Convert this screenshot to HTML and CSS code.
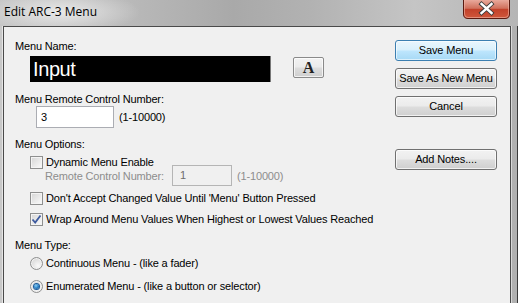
FILE: index.html
```html
<!DOCTYPE html>
<html>
<head>
<meta charset="utf-8">
<link rel="stylesheet" href="styles.css">
</head>
<body>
<div class="window">
  <div class="titlebar">
    <span class="title">Edit ARC-3 Menu</span>
    <div class="close">
      <svg width="47" height="19" viewBox="0 0 47 19">
        <defs>
          <linearGradient id="cg" x1="0" y1="0" x2="0" y2="1">
            <stop offset="0" stop-color="#e9a99b"/>
            <stop offset="0.45" stop-color="#d0705c"/>
            <stop offset="0.5" stop-color="#c2412a"/>
            <stop offset="1" stop-color="#d0583c"/>
          </linearGradient>
        </defs>
        <path d="M0.5 0 V14 Q0.5 18.5 5 18.5 H42 Q46.5 18.5 46.5 14 V0" fill="url(#cg)" stroke="#5a1a10" stroke-width="1"/>
        <path d="M1.5 0 V14 Q1.5 17.5 5 17.5 H42 Q45.5 17.5 45.5 14 V0" fill="none" stroke="#f0b8a8" stroke-opacity="0.6" stroke-width="1"/>
        <path d="M18.5 4 L28.5 13 M28.5 4 L18.5 13" stroke="#3a3a3a" stroke-width="4.2" stroke-linecap="square"/>
        <path d="M18.5 4 L28.5 13 M28.5 4 L18.5 13" stroke="#ffffff" stroke-width="2.4" stroke-linecap="square"/>
      </svg>
    </div>
  </div>
  <div class="frame">
    <div class="client">
      <div class="left">
        <div class="label first">Menu Name:</div>
        <div class="name-row">
          <div class="name-box">Input</div>
          <div class="btn font-btn">A</div>
        </div>
        <div class="label l2">Menu Remote Control Number:</div>
        <div class="field-row">
          <div class="textbox num">3</div>
          <span class="range">(1-10000)</span>
        </div>
        <div class="label l3">Menu Options:</div>
        <div class="check-row r1"><span class="check"></span><span>Dynamic Menu Enable</span></div>
        <div class="sub-row">
          <span class="disabled">Remote Control Number:</span>
          <div class="textbox dis-box">1</div>
          <span class="disabled range2">(1-10000)</span>
        </div>
        <div class="check-row r2"><span class="check"></span><span>Don't Accept Changed Value Until 'Menu' Button Pressed</span></div>
        <div class="check-row r3"><span class="check checked"><svg width="11" height="11" viewBox="0 0 11 11"><path d="M1.5 5.5 L4.2 8.5 L9.5 1.5" fill="none" stroke="#3d5a9e" stroke-width="1.8"/></svg></span><span>Wrap Around Menu Values When Highest or Lowest Values Reached</span></div>
        <div class="label l4">Menu Type:</div>
        <div class="radio-row q1"><span class="radio"></span><span>Continuous Menu - (like a fader)</span></div>
        <div class="radio-row q2"><span class="radio on"><span class="dot"></span></span><span>Enumerated Menu - (like a button or selector)</span></div>
      </div>
      <div class="right">
        <div class="btn wide default">Save Menu</div>
        <div class="btn wide">Save As New Menu</div>
        <div class="btn wide">Cancel</div>
        <div class="btn wide notes">Add Notes....</div>
      </div>
    </div>
  </div>
</div>
</body>
</html>
```
FILE: styles.css
```css
html, body {
  margin: 0;
  padding: 0;
}
body {
  width: 518px;
  height: 303px;
  overflow: hidden;
  font-family: "Liberation Sans", Arial, sans-serif;
  font-size: 11px;
  letter-spacing: -0.15px;
  color: #000;
}
.window {
  width: 518px;
  height: 303px;
  display: flex;
  flex-direction: column;
  background: #b4b4b4;
}
.titlebar {
  height: 26px;
  flex: none;
  display: flex;
  align-items: flex-start;
  justify-content: space-between;
  background:
    radial-gradient(ellipse 80px 22px at 60px 12px, rgba(235,235,235,0.95), rgba(235,235,235,0) 100%),
    linear-gradient(90deg, #c4c4c4 0%, #b9b9b9 25%, #a9a9a9 45%, #b2b2b2 60%, #c5c5c5 80%, #b5b5b5 100%);
}
.title {
  font-family: "Open Sans", "Noto Sans", sans-serif;
  font-size: 12px;
  letter-spacing: 0;
  color: #000;
  margin: 4px 0 0 4px;
  line-height: 16px;
}
.close {
  margin-right: 8px;
  height: 19px;
}
.close svg { display: block; }
.frame {
  flex: 1;
  display: flex;
  padding: 0 6px 0 3px;
  background: linear-gradient(90deg, #c8c8c8, #b0b0b0);
  border-right: 1px solid #3a3a3a;
}
.client {
  flex: 1;
  display: flex;
  background: #f0f0f0;
  border: 1px solid #4a4a4a;
  border-bottom: none;
  box-shadow: 1px 0 0 #d8d8d8, -1px 0 0 #e6e6e6;
}
.left {
  width: 380px;
  padding-left: 11px;
  display: flex;
  flex-direction: column;
  align-items: flex-start;
}
.right {
  width: 102px;
  margin-left: 0;
  padding-top: 13px;
  display: flex;
  flex-direction: column;
}
.label {
  line-height: 13px;
  height: 13px;
}
.first { margin-top: 13px; }
.l2 { margin-top: 11px; }
.l3 { margin-top: 10px; }
.l4 { margin-top: 13px; }
.name-row {
  display: flex;
  align-items: flex-start;
  margin-top: 3px;
  margin-left: 15px;
}
.name-box {
  width: 237px;
  height: 26px;
  background: #000;
  color: #fff;
  font-size: 20px;
  line-height: 26px;
  padding-left: 3px;
  border-right: 1px solid #777;
  box-sizing: content-box;
  letter-spacing: -0.4px;
}
.btn {
  box-sizing: border-box;
  border: 1px solid #707070;
  border-radius: 3px;
  background: linear-gradient(#f2f2f2 0%, #ebebeb 48%, #dddddd 52%, #cfcfcf 100%);
  box-shadow: inset 0 0 0 1px rgba(255,255,255,0.7);
  display: flex;
  align-items: center;
  justify-content: center;
  line-height: 13px;
}
.font-btn {
  width: 31px;
  height: 21px;
  margin-left: 22px;
  margin-top: 1px;
  font-family: "Liberation Serif", "Times New Roman", serif;
  font-weight: bold;
  font-size: 16px;
  letter-spacing: 0;
  color: #222;
  border-color: #8a8a8a;
  border-radius: 2px;
}
.field-row {
  display: flex;
  align-items: center;
  margin-left: 21px;
}
.textbox {
  box-sizing: border-box;
  background: #fff;
  border: 1px solid #abadb3;
  line-height: 13px;
  display: flex;
  align-items: center;
  padding-left: 4px;
}
.num {
  width: 78px;
  height: 22px;
}
.range { margin-left: 5px; }
.check-row, .radio-row {
  display: flex;
  align-items: center;
  height: 13px;
  line-height: 13px;
  margin-left: 15px;
}
.check-row > span:last-child, .radio-row > span:last-child { margin-left: 3px; }
.r1 { margin-top: 5px; }
.r2 { margin-top: 6px; }
.r3 { margin-top: 8px; }
.q1 { margin-top: 5px; }
.q2 { margin-top: 10px; }
.check {
  width: 13px;
  height: 13px;
  box-sizing: border-box;
  border: 1px solid #8e8f8f;
  background: linear-gradient(135deg, #d5d5d5 0%, #e6e6e6 45%, #fbfbfb 100%);
  box-shadow: inset 0 0 0 1px #f4f4f4;
  display: flex;
  align-items: center;
  justify-content: center;
  flex: none;
}
.check svg { display: block; }
.radio {
  width: 13px;
  height: 13px;
  box-sizing: border-box;
  border-radius: 50%;
  border: 1px solid #8e8f8f;
  background: radial-gradient(circle at 65% 70%, #fafafa 0%, #e4e4e4 50%, #cfcfcf 100%);
  box-shadow: inset 0 0 0 1px #f2f2f2;
  display: flex;
  align-items: center;
  justify-content: center;
  flex: none;
}
.dot {
  width: 5px;
  height: 5px;
  border-radius: 50%;
  background: radial-gradient(circle at 40% 35%, #8fd0f5 0%, #2a83c8 50%, #0b3f7a 100%);
  box-shadow: 0 0 0 1px #1c5c9c;
}
.sub-row {
  display: flex;
  align-items: center;
  margin-top: -4px;
  margin-left: 30px;
  height: 21px;
}
.disabled { color: #8d8d8d; }
.dis-box {
  width: 60px;
  height: 21px;
  margin-left: 8px;
  background: #f0f0f0;
  border-color: #b5b5b5;
  color: #6d6d6d;
  padding-left: 7px;
}
.range2 { margin-left: 5px; }
.wide {
  width: 102px;
  height: 21px;
  margin-bottom: 7px;
}
.default {
  border-color: #3c7fb1;
  background: linear-gradient(#eaf6fd 0%, #d9f0fc 48%, #bee6fd 52%, #a7d9f5 100%);
  box-shadow: inset 0 0 0 1px rgba(255,255,255,0.6);
}
.notes { margin-top: 25px; }
```
